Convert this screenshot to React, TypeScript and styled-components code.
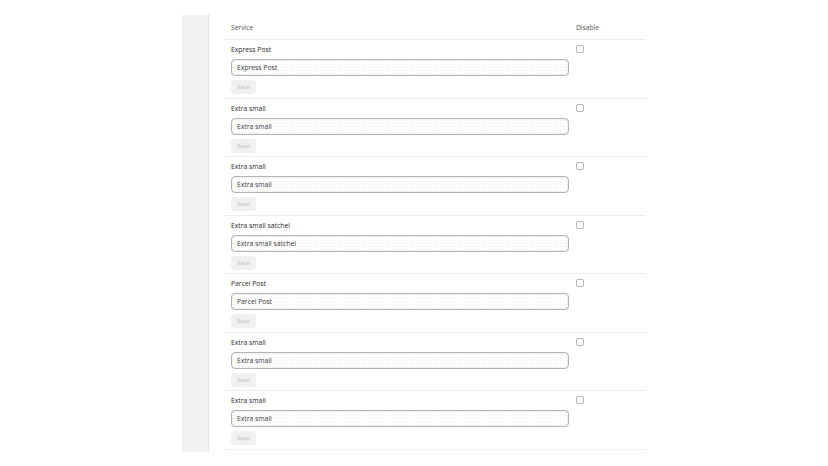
import React from "react";
import styled, { createGlobalStyle } from "styled-components";

const Global = createGlobalStyle`
  html, body { margin: 0; padding: 0; background: #fff; }
  body { font-family: "Open Sans", "Noto Sans", sans-serif; color: #333; }
`;

const Page = styled.div`
  display: flex;
  align-items: flex-start;
  gap: 15px;
  padding: 15px 0 0 182px;
`;

const Sidebar = styled.div`
  width: 26px;
  height: 437px;
  background: #f1f1f1;
  border-right: 1px dotted #d6d6d6;
`;

const Table = styled.div`
  width: 422px;
  display: flex;
  flex-direction: column;
`;

const Grid = styled.div<{ $last?: boolean; $header?: boolean }>`
  display: grid;
  grid-template-columns: 345px 77px;
  border-bottom: 1px ${(p) => (p.$last ? "dotted #e2e2e2" : "solid #ececec")};
  height: ${(p) => (p.$header ? "24px" : "57.5px")};
  box-sizing: content-box;
`;

const HeadCell = styled.div`
  display: flex;
  align-items: center;
  padding-left: 7px;
  font-size: 6.7px;
  color: #555;
`;

const Cell = styled.div`
  padding: 5px 0 0 7px;
  display: flex;
  flex-direction: column;
  align-items: flex-start;
`;

const Label = styled.div`
  font-size: 6.8px;
  color: #2a2a2a;
  height: 10px;
  line-height: 10px;
`;

const Input = styled.div`
  margin-top: 4px;
  box-sizing: border-box;
  width: 338px;
  height: 17px;
  border: 1px solid #b3b3b3;
  border-radius: 4px;
  padding-left: 5px;
  display: flex;
  align-items: center;
  font-size: 6.8px;
  color: #3a3a3a;
  background-color: #fff;
  background-image: radial-gradient(circle, #ededed 0.6px, transparent 0.7px);
  background-size: 3px 3px;
  box-shadow: inset 0 0 0 0.5px #e6e6e6;
`;

const SaveButton = styled.div`
  margin-top: 4px;
  width: 25px;
  height: 14px;
  border-radius: 3px;
  background: #f0f0f0;
  color: #bdbdbd;
  font-size: 6px;
  display: flex;
  align-items: center;
  justify-content: center;
`;

const Check = styled.div`
  width: 8px;
  height: 8px;
  box-sizing: border-box;
  border: 1px solid #b5b5b5;
  border-radius: 2px;
  background: #fff;
`;

const rows = [
  "Express Post",
  "Extra small",
  "Extra small",
  "Extra small satchel",
  "Parcel Post",
  "Extra small",
  "Extra small",
];

export default function App() {
  return (
    <>
      <Global />
      <Page>
        <Sidebar />
        <Table>
          <Grid $header>
            <HeadCell>Service</HeadCell>
            <HeadCell>Disable</HeadCell>
          </Grid>
          {rows.map((r, i) => (
            <Grid key={i} $last={i === rows.length - 1}>
              <Cell>
                <Label>{r}</Label>
                <Input>{r}</Input>
                <SaveButton>Save</SaveButton>
              </Cell>
              <Cell>
                <Check />
              </Cell>
            </Grid>
          ))}
        </Table>
      </Page>
    </>
  );
}
